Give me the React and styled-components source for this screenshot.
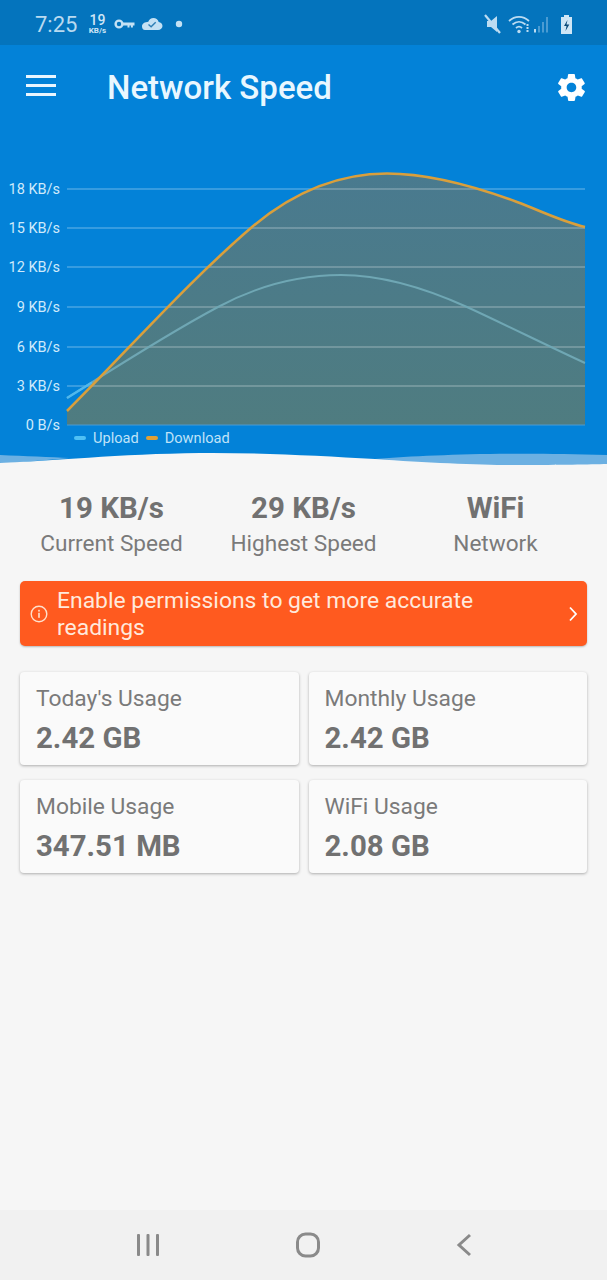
import React from "react";
import styled, { createGlobalStyle } from "styled-components";
import { IoMdSettings } from "react-icons/io";

const speedStats = [
  { value: "19 KB/s", label: "Current Speed" },
  { value: "29 KB/s", label: "Highest Speed" },
  { value: "WiFi", label: "Network" },
];

const usage = [
  { label: "Today's Usage", value: "2.42 GB" },
  { label: "Monthly Usage", value: "2.42 GB" },
  { label: "Mobile Usage", value: "347.51 MB" },
  { label: "WiFi Usage", value: "2.08 GB" },
];

const ticks = [
  { label: "18 KB/s", y: 59 },
  { label: "15 KB/s", y: 98 },
  { label: "12 KB/s", y: 137 },
  { label: "9 KB/s", y: 177 },
  { label: "6 KB/s", y: 217 },
  { label: "3 KB/s", y: 256 },
  { label: "0 B/s", y: 295 },
];

// y values are relative to the chart svg, which starts 130px down the page
const downloadPath =
  "M67 281 C129 219 190 150 252 97 C297 59 342 43.500 387 43.500 C430 43.500 474 56 517 72 C540 80.500 562 91.500 585 97";
const uploadPath =
  "M67 268 C117 236.500 168 203.500 218 177 C259 155 300 145 341 145 C383 145 425 158 467 177 C506 195 546 215 585 233";

const Chart = () => (
  <ChartSvg viewBox="0 0 607 306">
    <defs>
      <linearGradient id="areaFill" x1="0" y1="0" x2="0" y2="1">
        <stop offset="0" stopColor="#497a8f" />
        <stop offset="1" stopColor="#4f7c80" />
      </linearGradient>
    </defs>
    <path d={`${downloadPath} L585 295 L67 295 Z`} fill="url(#areaFill)" />
    {ticks.map((t) => (
      <g key={t.label}>
        <line
          x1="67"
          x2="585"
          y1={t.y}
          y2={t.y}
          stroke={t.y === 295 ? "#4d9bd0" : "#ffffff"}
          strokeOpacity={t.y === 295 ? 1 : 0.42}
          strokeWidth="1"
        />
        <AxisLabel x="60" y={t.y + 5} textAnchor="end">
          {t.label}
        </AxisLabel>
      </g>
    ))}
    <path d={uploadPath} fill="none" stroke="#6fa7b4" strokeWidth="2" />
    <path d="M67 268 L92 252.500" fill="none" stroke="#4fb8ee" strokeWidth="2.4" />
    <path d={downloadPath} fill="none" stroke="#d99f3c" strokeWidth="2.6" />
  </ChartSvg>
);

const Legend = () => (
  <LegendRow>
    <LegendItem $color="#4fc0f5">Upload</LegendItem>
    <LegendItem $color="#e0a035">Download</LegendItem>
  </LegendRow>
);

const StatusIcons = () => (
  <svg width="90" height="20" viewBox="0 0 90 20">
    <circle cx="5" cy="10" r="3.4" fill="none" stroke="#c4e1f4" strokeWidth="2.4" />
    <path d="M8 8.600h12.500v2.800h-1.600v2h-2v-2h-1.400v2h-2v-2H8z" fill="#c4e1f4" />
    <path
      d="M31 16h13c2.500 0 4.500-1.800 4.500-4 0-2.100-1.700-3.800-3.800-4C44 5.500 41.800 4 39.500 4c-2.500 0-4.500 1.500-5.200 3.700C31 8 28 9.500 28 12.300 28 14.500 29 16 31 16z"
      fill="#c4e1f4"
    />
    <path d="M34.500 10.500l2.600 2.300 4.600-4.600" fill="none" stroke="#2f7fb5" strokeWidth="1.400" />
    <circle cx="65" cy="10" r="3.200" fill="#c4e1f4" />
  </svg>
);

const SystemIcons = () => (
  <svg width="96" height="24" viewBox="0 0 96 24">
    <g fill="#bcdcf2">
      <path d="M3 9h4l6-5v16l-6-5H3z" />
      <path d="M1 3l15 18" stroke="#bcdcf2" strokeWidth="2.200" />
      <path d="M25 9c6-5.500 14-5.500 20 0" fill="none" stroke="#bcdcf2" strokeWidth="1.800" />
      <path d="M28.500 12.500c4-3.600 9-3.600 13 0" fill="none" stroke="#bcdcf2" strokeWidth="1.800" />
      <path d="M32 16c2-1.800 4-1.800 6 0" fill="none" stroke="#bcdcf2" strokeWidth="1.800" />
      <circle cx="35" cy="19.500" r="1.700" />
      <rect x="42.500" y="12" width="2" height="2" />
      <rect x="42.500" y="15" width="2" height="2" />
      <rect x="42.500" y="18" width="2" height="2" />
    </g>
    <g fill="#4a9bd2">
      <rect x="50" y="17" width="2" height="3.500" fill="#bcdcf2" />
      <rect x="54" y="14" width="2" height="6.500" />
      <rect x="58" y="10" width="2" height="10.500" />
      <rect x="62" y="5" width="2" height="15.500" />
    </g>
    <path d="M77 5h3V3h5v2h3v17H77z" fill="#cfe6f6" />
    <path d="M83.500 8l-3.500 6h2.500l-1 5 3.800-6.500H82.500z" fill="#0b4a78" />
  </svg>
);

const App = () => (
  <Page>
    <GlobalStyle />
    <Hero>
      <StatusBar>
        <Clock>7:25</Clock>
        <NetSpeed>
          <strong>19</strong>
          <small>KB/s</small>
        </NetSpeed>
        <StatusIcons />
        <SystemSlot>
          <SystemIcons />
        </SystemSlot>
      </StatusBar>
      <Toolbar>
        <MenuButton>
          <span />
          <span />
          <span />
        </MenuButton>
        <Title>Network Speed</Title>
        <IoMdSettings size={33} color="#fff" />
      </Toolbar>
      <Chart />
      <Legend />
      <Wave viewBox="0 0 607 18" preserveAspectRatio="none">
        <path d="M0 5 C 25 6, 50 7, 70 8 L 0 14 Z" fill="#6cb0e2" />
        <path d="M375 9 C 430 5, 500 2, 607 5 L607 18 L375 18 Z" fill="#6cb0e2" />
        <path
          d="M0 13 C 50 11, 120 4, 200 3 C 260 2.500, 320 6, 375 9 C 430 13, 490 15.500, 520 15 C 560 15, 590 14.500, 607 14 L607 18 L0 18 Z"
          fill="#f6f6f6"
        />
      </Wave>
    </Hero>

    <Stats>
      {speedStats.map((s) => (
        <Stat key={s.label}>
          <StatValue>{s.value}</StatValue>
          <StatLabel>{s.label}</StatLabel>
        </Stat>
      ))}
    </Stats>

    <Banner>
      <svg width="18" height="18" viewBox="0 0 18 18" fill="none">
        <circle cx="9" cy="9" r="7.800" stroke="#ffe0cc" strokeWidth="1.400" />
        <rect x="8.200" y="7.800" width="1.600" height="5" fill="#ffe0cc" />
        <rect x="8.200" y="4.800" width="1.600" height="1.800" fill="#ffe0cc" />
      </svg>
      <BannerText>Enable permissions to get more accurate readings</BannerText>
      <svg width="10" height="16" viewBox="0 0 10 16" fill="none">
        <path d="M2 1.500l6 6.500-6 6.500" stroke="#fff" strokeWidth="1.800" />
      </svg>
    </Banner>

    <Cards>
      {usage.map((u) => (
        <Card key={u.label}>
          <CardLabel>{u.label}</CardLabel>
          <CardValue>{u.value}</CardValue>
        </Card>
      ))}
    </Cards>

    <NavBar>
      <svg width="24" height="24" viewBox="0 0 24 24" fill="#8a8a8a">
        <rect x="1" y="1" width="3" height="22" rx="1" />
        <rect x="10.500" y="1" width="3" height="22" rx="1" />
        <rect x="20" y="1" width="3" height="22" rx="1" />
      </svg>
      <svg width="24" height="26" viewBox="0 0 24 26" fill="none">
        <rect x="1.500" y="2" width="21" height="22" rx="8" stroke="#8a8a8a" strokeWidth="3" />
      </svg>
      <svg width="16" height="24" viewBox="0 0 16 24" fill="none">
        <path d="M15 2L4 12l11 10" stroke="#8a8a8a" strokeWidth="3" />
      </svg>
    </NavBar>
  </Page>
);

const GlobalStyle = createGlobalStyle`
  body {
    margin: 0;
    background: #f6f6f6;
    font-family: Roboto, "Noto Sans", sans-serif;
  }
`;

const Page = styled.div`
  width: 607px;
  height: 1280px;
  display: flex;
  flex-direction: column;
  background: #f6f6f6;
  overflow: hidden;
`;

const Hero = styled.header`
  background: #0382d8;
  flex-shrink: 0;
`;

const StatusBar = styled.div`
  height: 45px;
  box-sizing: border-box;
  padding: 3px 27px 0 35px;
  display: flex;
  align-items: center;
  background: #0474bd;
  color: #b9daf0;
`;

const Clock = styled.span`
  font-size: 22px;
  margin-right: 9px;
`;

const NetSpeed = styled.span`
  display: flex;
  flex-direction: column;
  align-items: center;
  width: 22px;
  margin-right: 6px;
  line-height: 1;
  color: #cfe6f6;
  & strong {
    font-size: 14px;
    font-weight: 500;
  }
  & small {
    font-size: 8px;
    font-weight: 700;
  }
`;

const SystemSlot = styled.div`
  margin-left: auto;
  display: flex;
`;

const Toolbar = styled.div`
  height: 85px;
  padding: 0 19px 0 26px;
  display: flex;
  align-items: center;
`;

const MenuButton = styled.div`
  width: 30px;
  margin-bottom: 4px;
  display: flex;
  flex-direction: column;
  gap: 6px;
  & span {
    height: 3px;
    background: #eaf6ff;
  }
`;

const Title = styled.h1`
  flex: 1;
  margin: 0 0 0 51px;
  font-size: 33px;
  font-weight: 500;
  line-height: 1;
  color: #e9f7ff;
`;

const ChartSvg = styled.svg`
  display: block;
  width: 607px;
  height: 306px;
`;

const AxisLabel = styled.text`
  font-family: Roboto, sans-serif;
  font-size: 14.5px;
  fill: #cfeafb;
`;

const LegendRow = styled.div`
  height: 16px;
  margin: -6px 0 4px;
  padding-left: 74px;
  display: flex;
  gap: 7px;
  align-items: center;
`;

const LegendItem = styled.span`
  display: flex;
  align-items: center;
  gap: 7px;
  font-size: 14.6px;
  color: #bfe2f8;
  &::before {
    content: "";
    width: 12px;
    height: 4px;
    border-radius: 2px;
    background: ${(p) => p.$color};
  }
`;

const Wave = styled.svg`
  display: block;
  width: 607px;
  height: 18px;
`;

const Stats = styled.section`
  display: grid;
  grid-template-columns: repeat(3, 192px);
  justify-content: center;
  padding-top: 22px;
`;

const Stat = styled.div`
  display: flex;
  flex-direction: column;
  align-items: center;
`;

const StatValue = styled.div`
  font-size: 29.5px;
  font-weight: 700;
  line-height: 36px;
  color: #717171;
`;

const StatLabel = styled.div`
  font-size: 22.6px;
  line-height: 36px;
  color: #7a7a7a;
`;

const Banner = styled.div`
  margin: 19px 20px 0;
  height: 65px;
  padding: 0 9px 0 10px;
  display: flex;
  align-items: center;
  gap: 9px;
  border-radius: 5px;
  background: #ff5a1f;
  box-shadow: 0 1px 2px rgba(0, 0, 0, 0.25);
`;

const BannerText = styled.div`
  flex: 1;
  font-size: 22.9px;
  line-height: 27px;
  color: #ffe9dc;
`;

const Cards = styled.section`
  margin: 26px 20px 0;
  display: grid;
  grid-template-columns: 1fr 1fr;
  gap: 15px 10px;
`;

const Card = styled.div`
  height: 93px;
  padding: 13px 16px;
  box-sizing: border-box;
  background: #fafafa;
  border-radius: 4px;
  box-shadow: 0 1px 3px rgba(0, 0, 0, 0.3);
`;

const CardLabel = styled.div`
  font-size: 22.8px;
  line-height: 28px;
  color: #7a7a7a;
`;

const CardValue = styled.div`
  margin-top: 7px;
  font-size: 29.4px;
  font-weight: 700;
  line-height: 36px;
  color: #717171;
`;

const NavBar = styled.nav`
  margin-top: auto;
  height: 70px;
  padding: 0 136px;
  display: flex;
  align-items: center;
  justify-content: space-between;
  background: #f1f1f1;
`;

export default App;
